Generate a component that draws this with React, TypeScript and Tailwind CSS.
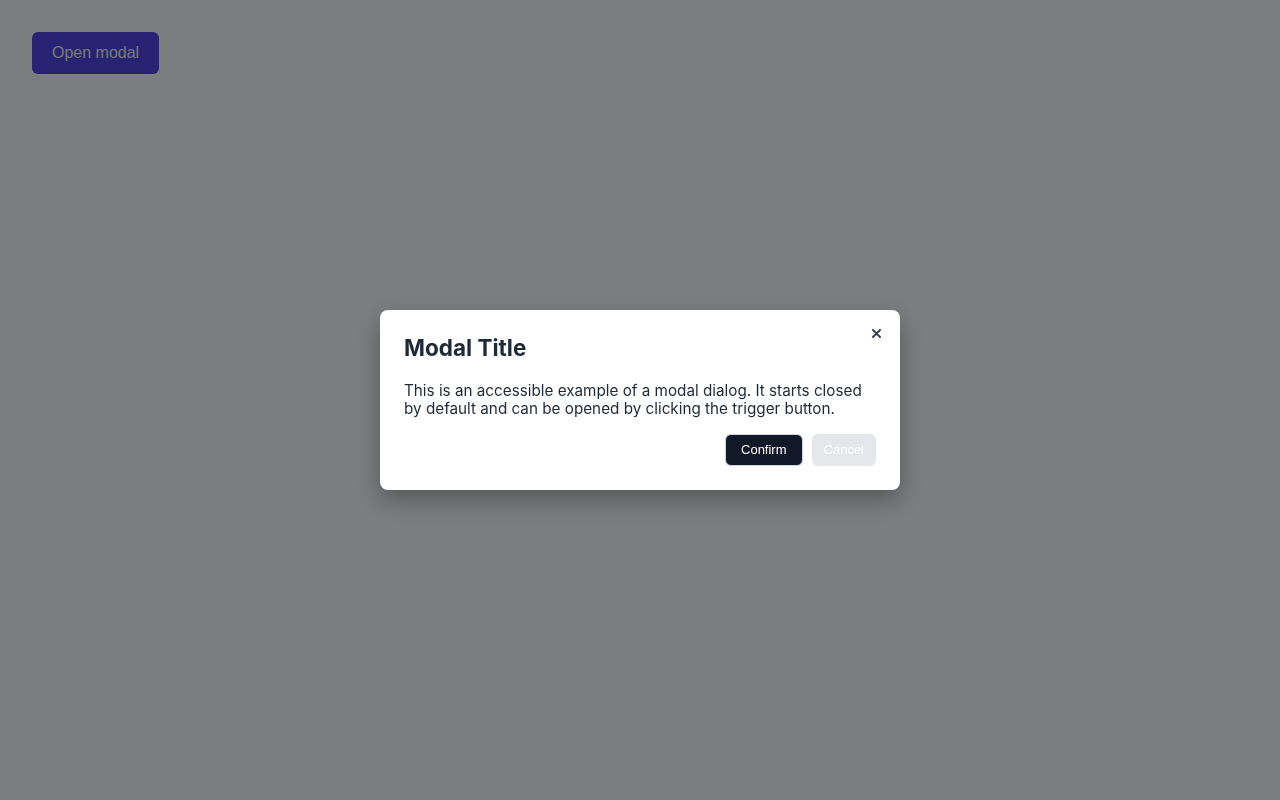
import { useState } from 'react';

function App() {
  const [open, setOpen] = useState(true);

  return (
    <div className="relative min-h-screen bg-[#f8fafe] p-8 font-['Inter',sans-serif]">
      <button
        type="button"
        onClick={() => setOpen(true)}
        className="rounded-md bg-[#4f46e5] px-5 py-[9px] font-['Liberation_Sans',Arial,sans-serif] text-base text-[#f0f0f0]"
      >
        Open modal
      </button>

      {open && (
        <div className="fixed inset-0 flex items-center justify-center bg-black/50">
          <div
            role="dialog"
            aria-modal="true"
            className="relative w-[520px] rounded-lg bg-white px-6 pt-6 pb-6 shadow-[0_10px_25px_rgba(0,0,0,0.3)]"
          >
            <button
              type="button"
              onClick={() => setOpen(false)}
              className="absolute top-[11px] right-[12px] flex h-6 w-6 items-center justify-center text-[#374151]"
              aria-label="Close"
            >
              <svg width="9" height="9" viewBox="0 0 9 9" fill="none">
                <path d="M1 1L8 8M8 1L1 8" stroke="currentColor" strokeWidth="2" strokeLinecap="round" />
              </svg>
            </button>
            <h2 className="text-[22.5px] font-bold leading-7 text-[#1f2937]">Modal Title</h2>
            <p className="mt-[20px] text-[15.25px] leading-[18px] text-[#1f2937]">
              This is an accessible example of a modal dialog. It starts closed by default and can be
              opened by clicking the trigger button.
            </p>
            <div className="mt-[16px] flex justify-end gap-[9px] font-['Liberation_Sans',Arial,sans-serif]">
              <button
                type="button"
                className="h-8 rounded-md border border-[#d1d5db] bg-[#111827] px-[15px] text-[13px] text-white"
              >
                Confirm
              </button>
              <button
                type="button"
                onClick={() => setOpen(false)}
                className="h-8 rounded-md bg-[#e5e7eb] px-3 text-[13px] text-white"
              >
                Cancel
              </button>
            </div>
          </div>
        </div>
      )}
    </div>
  );
}

export default App;
